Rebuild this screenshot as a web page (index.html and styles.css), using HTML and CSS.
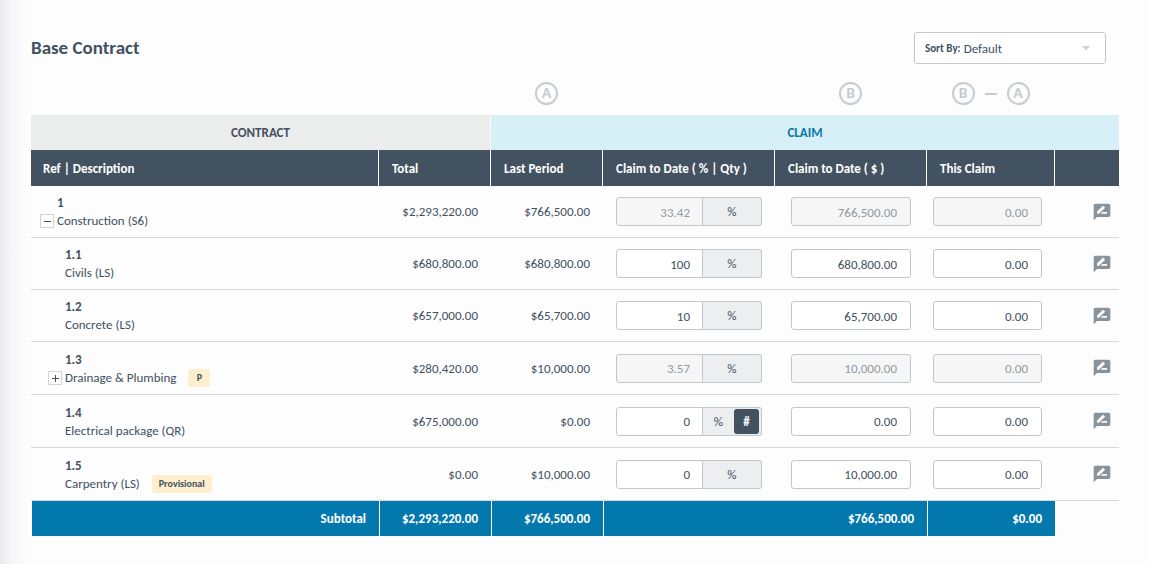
FILE: index.html
```html
<!DOCTYPE html>
<html lang="en">
<head>
<meta charset="utf-8">
<meta name="viewport" content="width=device-width, initial-scale=1">
<title>Base Contract</title>
<link rel="stylesheet" href="styles.css">
</head>
<body>
<svg width="0" height="0" class="sprite" aria-hidden="true">
  <symbol id="review" viewBox="0 0 24 24"><path d="M20 2H4c-1.1 0-1.99.9-1.99 2L2 22l4-4h14c1.1 0 2-.9 2-2V4c0-1.1-.9-2-2-2zM6 14v-2.47l6.88-6.88c.2-.2.51-.2.71 0l1.77 1.77c.2.2.2.51 0 .71L8.47 14H6zm12 0h-7.5l2-2H18v2z"/></symbol>
</svg>
<main class="page">
  <header class="top">
    <h1 class="title">Base Contract</h1>
    <div class="sort">
      <label class="sort-label" for="sort">Sort By:</label>
      <select class="sort-select" id="sort"><option>Default</option><option>Total</option></select>
      <svg class="sort-arrow" viewBox="0 0 8 5" aria-hidden="true"><path d="M0 0h8L4 4.500z"/></svg>
    </div>
  </header>
  <table class="claims">
    <colgroup>
      <col><col class="c-money"><col class="c-money"><col class="c-qty"><col class="c-date"><col class="c-this"><col class="c-note">
    </colgroup>
    <thead>
      <tr class="marks">
        <td></td><td></td>
        <td><div class="marks-set"><span class="mark">A</span></div></td>
        <td></td>
        <td><div class="marks-set"><span class="mark">B</span></div></td>
        <td><div class="marks-set"><span class="mark">B</span><span class="minus"></span><span class="mark">A</span></div></td>
        <td></td>
      </tr>
      <tr class="groups">
        <th class="g-contract" colspan="2" scope="colgroup">CONTRACT</th>
        <th class="g-claim" colspan="5" scope="colgroup">CLAIM</th>
      </tr>
      <tr class="heads">
        <th scope="col">Ref | Description</th><th scope="col">Total</th><th scope="col">Last Period</th><th scope="col">Claim to Date ( % | Qty )</th><th scope="col">Claim to Date ( $ )</th><th scope="col">This Claim</th><td></td>
      </tr>
    </thead>
    <tbody>
      <tr>
        <td class="desc root"><div class="item"><strong class="ref">1</strong><button class="toggle" type="button" aria-label="Collapse Construction"><svg viewBox="0 0 12 12"><path d="M3 6.500h7"/></svg></button><span class="name">Construction (S6)</span></div></td>
        <td class="money">$2,293,220.00</td><td class="money">$766,500.00</td>
        <td class="f-qty"><div class="qty"><input class="field" aria-label="Quantity 1" value="33.42" disabled><span class="unit">%</span></div></td>
        <td class="f-date"><input class="field" aria-label="Claim to date 1" value="766,500.00" disabled></td>
        <td class="f-this"><input class="field" aria-label="This claim 1" value="0.00" disabled></td>
        <td class="f-note"><button class="note" type="button" aria-label="Note 1"><svg><use href="#review"/></svg></button></td>
      </tr>
      <tr>
        <td class="desc"><div class="item"><strong class="ref">1.1</strong><span class="name">Civils (LS)</span></div></td>
        <td class="money">$680,800.00</td><td class="money">$680,800.00</td>
        <td class="f-qty"><div class="qty"><input class="field" aria-label="Quantity 1.1" value="100"><span class="unit">%</span></div></td>
        <td class="f-date"><input class="field" aria-label="Claim to date 1.1" value="680,800.00"></td>
        <td class="f-this"><input class="field" aria-label="This claim 1.1" value="0.00"></td>
        <td class="f-note"><button class="note" type="button" aria-label="Note 1.1"><svg><use href="#review"/></svg></button></td>
      </tr>
      <tr>
        <td class="desc"><div class="item"><strong class="ref">1.2</strong><span class="name">Concrete (LS)</span></div></td>
        <td class="money">$657,000.00</td><td class="money">$65,700.00</td>
        <td class="f-qty"><div class="qty"><input class="field" aria-label="Quantity 1.2" value="10"><span class="unit">%</span></div></td>
        <td class="f-date"><input class="field" aria-label="Claim to date 1.2" value="65,700.00"></td>
        <td class="f-this"><input class="field" aria-label="This claim 1.2" value="0.00"></td>
        <td class="f-note"><button class="note" type="button" aria-label="Note 1.2"><svg><use href="#review"/></svg></button></td>
      </tr>
      <tr class="tall">
        <td class="desc"><div class="item"><strong class="ref">1.3</strong><button class="toggle" type="button" aria-label="Expand Drainage &amp; Plumbing"><svg viewBox="0 0 12 12"><path d="M3 6.500h7M6.500 3v7"/></svg></button><span class="name">Drainage &amp; Plumbing<span class="badge">P</span></span></div></td>
        <td class="money">$280,420.00</td><td class="money">$10,000.00</td>
        <td class="f-qty"><div class="qty"><input class="field" aria-label="Quantity 1.3" value="3.57" disabled><span class="unit">%</span></div></td>
        <td class="f-date"><input class="field" aria-label="Claim to date 1.3" value="10,000.00" disabled></td>
        <td class="f-this"><input class="field" aria-label="This claim 1.3" value="0.00" disabled></td>
        <td class="f-note"><button class="note" type="button" aria-label="Note 1.3"><svg><use href="#review"/></svg></button></td>
      </tr>
      <tr class="tall">
        <td class="desc"><div class="item"><strong class="ref">1.4</strong><span class="name">Electrical package (QR)</span></div></td>
        <td class="money">$675,000.00</td><td class="money">$0.00</td>
        <td class="f-qty"><div class="qty"><input class="field" aria-label="Quantity 1.4" value="0"><span class="unit switch"><button class="opt" type="button">%</button><button class="opt on" type="button">#</button></span></div></td>
        <td class="f-date"><input class="field" aria-label="Claim to date 1.4" value="0.00"></td>
        <td class="f-this"><input class="field" aria-label="This claim 1.4" value="0.00"></td>
        <td class="f-note"><button class="note" type="button" aria-label="Note 1.4"><svg><use href="#review"/></svg></button></td>
      </tr>
      <tr class="tall">
        <td class="desc"><div class="item"><strong class="ref">1.5</strong><span class="name">Carpentry (LS)<span class="badge">Provisional</span></span></div></td>
        <td class="money">$0.00</td><td class="money">$10,000.00</td>
        <td class="f-qty"><div class="qty"><input class="field" aria-label="Quantity 1.5" value="0"><span class="unit">%</span></div></td>
        <td class="f-date"><input class="field" aria-label="Claim to date 1.5" value="10,000.00"></td>
        <td class="f-this"><input class="field" aria-label="This claim 1.5" value="0.00"></td>
        <td class="f-note"><button class="note" type="button" aria-label="Note 1.5"><svg><use href="#review"/></svg></button></td>
      </tr>
    </tbody>
    <tfoot>
      <tr class="totals">
        <th scope="row">Subtotal</th><td>$2,293,220.00</td><td>$766,500.00</td><td colspan="2">$766,500.00</td><td>$0.00</td>
      </tr>
    </tfoot>
  </table>
</main>
</body>
</html>
```
FILE: styles.css
```css
* { box-sizing: border-box; }
body {
  margin: 0;
  min-height: 100vh;
  background: linear-gradient(90deg, #e9eaec 0, #f6f6f7 12px, #fdfdfe 28px);
  color: #42515f;
  font: 13px/19px Carlito, Lato, sans-serif;
}
input, select, button { font: inherit; color: inherit; }
.sprite { position: absolute; }
.page { padding: 32px 31px 28px; }
.top { display: flex; align-items: center; justify-content: space-between; padding-right: 13px; }
.title { margin: 0; font-size: 19px; line-height: 32px; }
.sort {
  display: flex; align-items: center;
  width: 192px; height: 32px; padding: 0 15px 0 10px;
  border: 1px solid #c3c7cb; border-radius: 3px; background: #fff;
}
.sort-label { font-size: 11px; font-weight: 700; }
.sort-select { flex: 1; min-width: 0; padding: 0 0 0 3px; border: 0; background: none; appearance: none; }
.sort-arrow { width: 8px; height: 5px; fill: #cfd2d5; pointer-events: none; }

.claims { width: 100%; border-collapse: separate; border-spacing: 0; table-layout: fixed; }
.claims th, .claims td { padding: 0; }
.c-money { width: 112px; }
.c-qty { width: 172px; }
.c-date { width: 152px; }
.c-this { width: 128px; }
.c-note { width: 64px; }

.marks .marks-set { display: flex; align-items: center; justify-content: center; padding: 18px 1px 10px 0; }
.mark {
  display: grid; place-items: center;
  width: 23px; height: 23px; border: 2px solid #c9cdd1; border-radius: 50%;
  color: #c5c9cd; font-family: Lato, sans-serif; font-weight: 900;
}
.minus { width: 12px; height: 2px; margin: 0 10px; background: #c9cdd1; }

.groups th { height: 35px; color: #42515f; }
.groups .g-contract { background: #ebecec; border-right: 1px solid #fdfdfe; }
.groups .g-claim { background: #d7f0f7; color: #0878a8; }
.heads th, .heads td { height: 36px; background: #435261; color: #fff; text-align: left; }
.claims .heads th { padding-left: 13px; border-right: 1px solid #fff; }
.claims .heads th:first-child { padding-left: 12px; }

tbody td { height: 52px; border-bottom: 1px solid #d6d8da; }
.tall td { height: 53px; }
.claims .desc { padding-left: 17px; }
.claims .root { padding-left: 9px; }
.item { display: grid; grid-template-columns: 14px 1fr; column-gap: 3px; align-items: center; }
.ref, .name { grid-column: 2; }
.name { display: flex; align-items: center; line-height: 18px; }
.toggle { grid-column: 1; grid-row: 2; width: 14px; height: 14px; padding: 0; border: 1px solid #d2d5d8; background: #fff; }
.toggle svg { display: block; width: 12px; height: 12px; fill: none; stroke: #42515f; }
.badge { min-width: 22px; margin-left: 12px; padding: 0 7px; border-radius: 3px; background: #fdefcd; font-size: 10px; font-weight: 700; text-align: center; }
.claims .money { padding-right: 13px; text-align: right; }

.field {
  display: block; width: 100%; height: 29px; padding: 1px 13px 0 6px;
  border: 1px solid #c3c7cb; border-radius: 3px; background: #fff; text-align: right;
}
.field:disabled { background: #f6f6f7; color: #92999f; }
.claims .f-qty { padding: 0 13px; }
.claims .f-date { padding: 0 16px; }
.claims .f-this { padding: 0 13px 0 6px; }
.qty { display: flex; }
.qty .field { flex: 1; min-width: 0; padding-right: 12px; border-radius: 3px 0 0 3px; }
.unit {
  display: grid; place-items: center; width: 59px;
  border: 1px solid #c3c7cb; border-left: 0; border-radius: 0 3px 3px 0; background: #edeef0;
}
.switch { grid-template-columns: 31px 25px; justify-content: start; }
.opt { width: 25px; height: 25px; padding: 0; border: 0; border-radius: 3px; background: none; }
.on { background: #435261; color: #fff; font-weight: 700; }
.claims .f-note { padding-right: 7px; }
.note { display: block; margin-left: auto; padding: 0; border: 0; background: none; }
.note svg { display: block; width: 20px; height: 20px; fill: #89939c; }

.totals th, .totals td { height: 35px; background: #0378ad; color: #fff; font-weight: 700; text-align: right; border-left: 1px solid #fff; }
.claims .totals th, .claims .totals td { padding-right: 13px; }
```
